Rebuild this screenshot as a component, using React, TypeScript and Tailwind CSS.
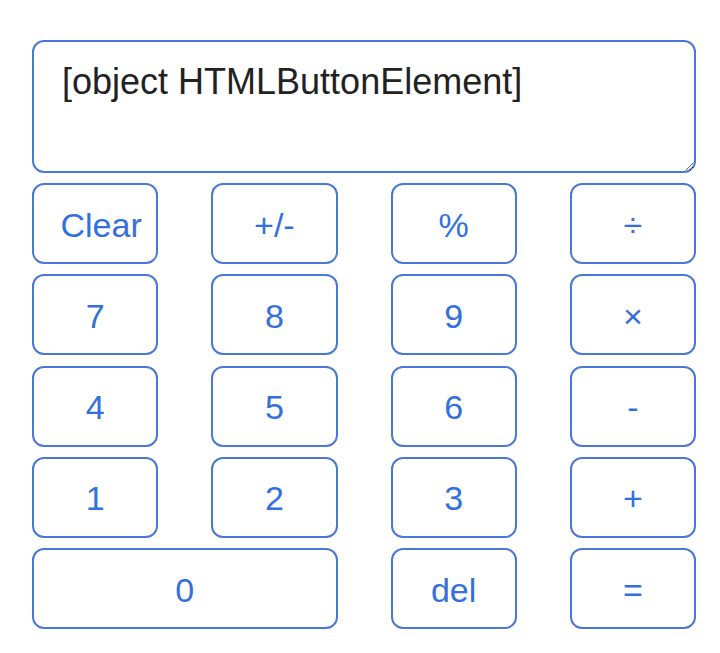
import { useState } from 'react';

const keys: { label: string; wide?: boolean; extra?: string }[] = [
  { label: 'Clear', extra: 'pl-[12px]' },
  { label: '+/-' },
  { label: '%' },
  { label: '÷' },
  { label: '7' },
  { label: '8' },
  { label: '9' },
  { label: '×' },
  { label: '4' },
  { label: '5' },
  { label: '6' },
  { label: '-' },
  { label: '1' },
  { label: '2' },
  { label: '3' },
  { label: '+' },
  { label: '0', wide: true },
  { label: 'del' },
  { label: '=' },
];

export default function App() {
  const [display, setDisplay] = useState('[object HTMLButtonElement]');

  return (
    <div className="min-h-screen bg-white pt-[40px] pl-[32px] font-['Liberation_Sans',Arial,sans-serif]">
      <div className="w-[664px] flex flex-col gap-[10px]">
        <textarea
          value={display}
          onChange={(e) => setDisplay(e.target.value)}
          className="h-[133px] w-full rounded-[12px] border-2 border-[#4a78d6] px-[28px] pt-[20px] text-[36px] leading-[40px] text-[#222] outline-none"
        />
        <div className="grid grid-cols-4 gap-x-[53px] gap-y-[10.25px]">
          {keys.map((k) => (
            <button
              key={k.label}
              className={
                'h-[81px] rounded-[12px] border-2 border-[#4a78d6] bg-white text-[34px] pt-[3px] text-[#3470dc] ' +
                (k.wide ? 'col-span-2 ' : '') +
                (k.extra ?? '')
              }
            >
              {k.label}
            </button>
          ))}
        </div>
      </div>
    </div>
  );
}
